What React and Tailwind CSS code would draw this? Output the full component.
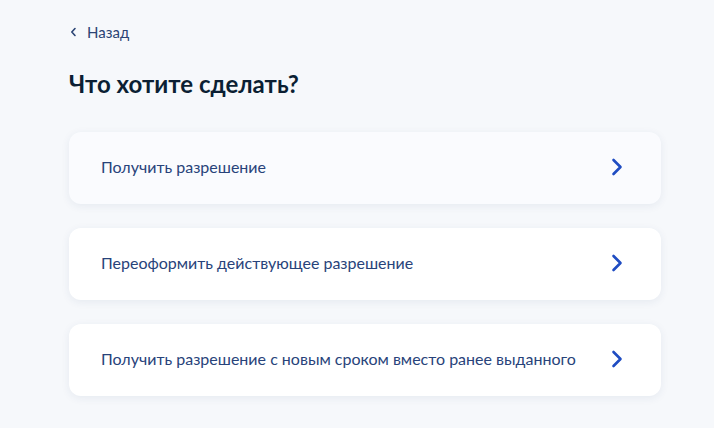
const options = [
  'Получить разрешение',
  'Переоформить действующее разрешение',
  'Получить разрешение с новым сроком вместо ранее выданного',
];

const Chevron = () => (
  <svg width="24" height="24" viewBox="0 0 24 24" fill="none">
    <path d="M8.5 5L15.5 12L8.5 19" stroke="#1f4cc2" strokeWidth="2.6" strokeLinecap="round" strokeLinejoin="round" />
  </svg>
);

export default function App() {
  return (
    <main className="min-h-screen w-[714px] h-[428px] overflow-hidden bg-[#f6f8fb] font-['Lato','Noto_Sans',sans-serif]">
      <div className="ml-[69px] w-[592px] pt-[22px]">
        <a href="#" className="flex items-center gap-[8px] text-[15px] leading-[20px] text-[#2b4474]">
          <svg width="10" height="10" viewBox="0 0 10 10" fill="none">
            <path d="M6 1.5L2.8 5L6 8.5" stroke="#2b4474" strokeWidth="1.6" strokeLinecap="round" strokeLinejoin="round" />
          </svg>
          Назад
        </a>
        <h1 className="mt-[26px] text-[24px] leading-[32px] font-bold text-[#0b1f33]">Что хотите сделать?</h1>
        <div className="mt-[32px] flex flex-col gap-[24px]">
          {options.map((text, i) => (
            <button
              key={text}
              className={`flex h-[72px] items-center justify-between rounded-[12px] pl-[32px] pr-[32px] pb-[2px] text-left text-[16px] text-[#28437a] shadow-[0_2px_8px_rgba(40,60,110,0.08)] ${i === 0 ? 'bg-[#fafbfe]' : 'bg-white'}`}
            >
              <span>{text}</span>
              <Chevron />
            </button>
          ))}
        </div>
      </div>
    </main>
  );
}
